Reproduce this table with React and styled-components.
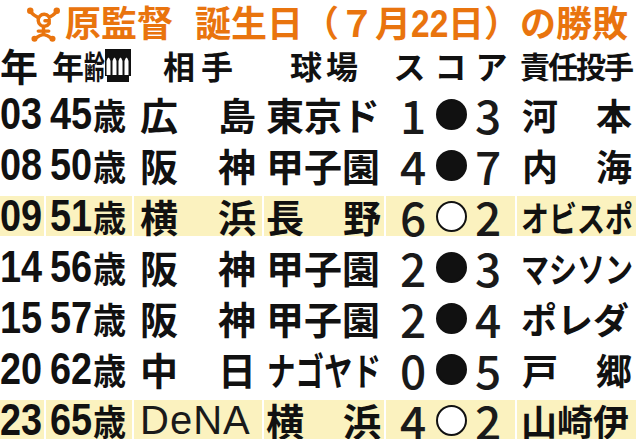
import React from 'react';
import styled, { createGlobalStyle } from 'styled-components';

const ORANGE = '#e9740e';
const BAND = '#fbf2bf';
const CJK = '"Noto Sans CJK JP", "Noto Sans", sans-serif';
const LATIN = '"Liberation Sans", Arial, sans-serif';

const GlobalStyle = createGlobalStyle`
  html, body {
    margin: 0;
    padding: 0;
    background: #fff;
  }
  body {
    width: 636px;
    height: 439px;
    overflow: hidden;
    font-family: ${CJK};
    color: #111;
  }
`;

const Page = styled.div`
  width: 636px;
`;

const Title = styled.h1`
  box-sizing: border-box;
  width: 636px;
  height: 42px;
  margin: 0;
  padding-left: 25px;
  color: ${ORANGE};
  font: 700 36px/42px ${CJK};
  white-space: nowrap;
  overflow: hidden;
`;

const LogoBox = styled.span`
  display: inline-block;
  width: 37px;
  height: 36px;
  margin-right: 3px;
  vertical-align: -5px;
`;

const TitleGap = styled.span`
  display: inline-block;
  width: 22px;
`;

const TitleNum = styled.span`
  display: inline-block;
  font: 700 39px/42px ${LATIN};
  transform: scaleX(0.86);
  transform-origin: left center;
  width: 37px;
`;

const Grid = styled.div`
  display: grid;
  grid-template-columns: 44px 86px 128px 120px 129px 119px;
  grid-template-rows: ${(p) => p.$h}px;
  column-gap: 2px;
  height: ${(p) => p.$h}px;
  margin-top: ${(p) => p.$mt}px;
`;

const Cell = styled.div`
  display: flex;
  align-items: center;
  justify-content: ${(p) => p.$justify || 'flex-start'};
  padding: 0 ${(p) => p.$pr || 0}px 0 ${(p) => p.$pl || 0}px;
  background: ${(p) => (p.$hl ? BAND : 'transparent')};
  white-space: nowrap;
  min-width: 0;
`;

const HeadText = styled.span`
  font: 700 ${(p) => p.$size || 32}px/1 ${CJK};
  letter-spacing: ${(p) => p.$ls || 0}px;
  margin-right: ${(p) => -(p.$ls || 0)}px;
`;

const Num = styled.span`
  display: inline-block;
  font: 700 44px/1 ${LATIN};
  transform: scaleX(0.86);
  transform-origin: left center;
  width: ${(p) => p.$w}px;
`;

const Kanji = styled.span`
  font: 700 ${(p) => p.$size || 38}px/1 ${CJK};
`;

const Squeeze = styled.span`
  display: inline-block;
  font: 700 ${(p) => p.$size || 36}px/1 ${CJK};
  transform: scaleX(${(p) => p.$sx});
  transform-origin: left center;
  width: ${(p) => p.$w}px;
`;

const Latin = styled.span`
  font: 400 40px/1 ${LATIN};
  letter-spacing: 1px;
  color: #1a1a1a;
`;

const ScoreDigit = styled.span`
  font: 500 46px/1 ${CJK};
  width: 27px;
  text-align: center;
  color: #1a1a1a;
`;

const Mark = styled.span`
  display: inline-block;
  box-sizing: border-box;
  flex-shrink: 0;
  width: 31px;
  height: 31px;
  border-radius: 50%;
  margin: 0 8px 0 9px;
  background: ${(p) => (p.$win ? '#fff' : '#111')};
  border: 2px solid #111;
`;

const Logo = () => (
  <LogoBox>
    <svg width="37" height="36" viewBox="0 0 38 38">
      <g fill="none" stroke={ORANGE} strokeWidth="3.6" strokeLinecap="round">
        <path d="M5 6 Q9 10 13 12" />
        <path d="M33 6 Q29 10 25 12" />
        <path d="M24.5 11 A6.3 6.3 0 1 0 25 18.5 L25 15.5 L20.5 15.5" />
        <path d="M19 21.5 L19 30" />
        <path d="M19 30 Q15 31 10.5 34" />
        <path d="M19 30 Q23 31 27.5 34" />
        <path d="M13.5 26.5 L24.5 26.5" />
      </g>
      <g fill={ORANGE}>
        <circle cx="5" cy="5" r="3.4" />
        <circle cx="33" cy="5" r="3.4" />
        <circle cx="9.5" cy="34.5" r="3.2" />
        <circle cx="28.5" cy="34.5" r="3.2" />
      </g>
    </svg>
  </LogoBox>
);

const Glitch = () => (
  <svg width="26" height="33" viewBox="0 0 26 33" style={{ flexShrink: 0 }}>
    <rect x="0" y="0" width="26" height="33" fill="#111" />
    {[3.5, 9.5, 15.5, 21.5].map((x) => (
      <path
        key={x}
        d={`M${x - 2} 26 L${x - 2} 12 Q${x} 5 ${x + 2} 12 L${x + 2} 26 Z`}
        fill="#fff"
      />
    ))}
    <rect x="0" y="27" width="2" height="6" fill="#fff" />
    <rect x="24" y="27" width="2" height="6" fill="#fff" />
  </svg>
);

const rows = [
  { y: '03', age: '45', team: ['広', '島'], park: ['東京ド'], s: ['1', '3'], win: false, p: ['河', '本'] },
  { y: '08', age: '50', team: ['阪', '神'], park: ['甲子園'], s: ['4', '7'], win: false, p: ['内', '海'] },
  { y: '09', age: '51', team: ['横', '浜'], park: ['長', '野'], s: ['6', '2'], win: true, p: ['オビスポ'], sq: true, hl: true },
  { y: '14', age: '56', team: ['阪', '神'], park: ['甲子園'], s: ['2', '3'], win: false, p: ['マシソン'], sq: true },
  { y: '15', age: '57', team: ['阪', '神'], park: ['甲子園'], s: ['2', '4'], win: false, p: ['ポレダ'] },
  { y: '20', age: '62', team: ['中', '日'], park: ['ナゴヤド'], s: ['0', '5'], win: false, p: ['戸', '郷'] },
  { y: '23', age: '65', team: ['DeNA'], park: ['横', '浜'], s: ['4', '2'], win: true, p: ['山崎伊'], hl: true },
];

const TeamCell = ({ team, hl }) =>
  team[0] === 'DeNA' ? (
    <Cell $hl={hl} $pl={6}>
      <Latin>DeNA</Latin>
    </Cell>
  ) : (
    <Cell $hl={hl} $justify="space-between" $pl={6} $pr={6}>
      <Kanji>{team[0]}</Kanji>
      <Kanji>{team[1]}</Kanji>
    </Cell>
  );

const ParkCell = ({ park, hl }) => {
  if (park.length === 2) {
    return (
      <Cell $hl={hl} $justify="space-between" $pl={2} $pr={3}>
        <Kanji>{park[0]}</Kanji>
        <Kanji>{park[1]}</Kanji>
      </Cell>
    );
  }
  if (park[0].length === 4) {
    return (
      <Cell $hl={hl} $pl={3}>
        <Squeeze $size={38} $sx={0.75} $w={114}>{park[0]}</Squeeze>
      </Cell>
    );
  }
  return (
    <Cell $hl={hl} $pl={2}>
      <Kanji>{park[0]}</Kanji>
    </Cell>
  );
};

const PitcherCell = ({ p, sq, hl }) => {
  if (p.length === 2) {
    return (
      <Cell $hl={hl} $justify="space-between" $pl={5} $pr={4}>
        <Kanji $size={36}>{p[0]}</Kanji>
        <Kanji $size={36}>{p[1]}</Kanji>
      </Cell>
    );
  }
  return (
    <Cell $hl={hl} $pl={4}>
      {sq ? (
        <Squeeze $size={35} $sx={0.8} $w={112}>{p[0]}</Squeeze>
      ) : (
        <Kanji $size={36}>{p[0]}</Kanji>
      )}
    </Cell>
  );
};

const App = () => (
  <Page>
    <GlobalStyle />
    <Title>
      <Logo />
      原監督
      <TitleGap />
      誕生日（７月<TitleNum>22</TitleNum>日）の勝敗
    </Title>

    <Grid $h={46} $mt={0}>
      <Cell>
        <HeadText $size={38}>年</HeadText>
      </Cell>
      <Cell $pl={6}>
        <HeadText $size={32}>年</HeadText>
        <Squeeze $size={32} $sx={0.65} $w={21}>齢</Squeeze>
        <Glitch />
      </Cell>
      <Cell $justify="center">
        <HeadText $ls={6}>相手</HeadText>
      </Cell>
      <Cell $justify="center">
        <HeadText $ls={4}>球場</HeadText>
      </Cell>
      <Cell $justify="center">
        <HeadText $ls={9}>スコア</HeadText>
      </Cell>
      <Cell $pl={3}>
        <HeadText $size={30} $ls={-2}>責任投手</HeadText>
      </Cell>
    </Grid>

    {rows.map((r, i) => (
      <Grid key={r.y} $h={40} $mt={i === 0 ? 6 : 11}>
        <Cell $hl={r.hl}>
          <Num $w={43}>{r.y}</Num>
        </Cell>
        <Cell $hl={r.hl} $pl={4}>
          <Num $w={43}>{r.age}</Num>
          <Squeeze $size={36} $sx={0.92} $w={33}>歳</Squeeze>
        </Cell>
        <TeamCell team={r.team} hl={r.hl} />
        <ParkCell park={r.park} hl={r.hl} />
        <Cell $hl={r.hl} $justify="center">
          <ScoreDigit>{r.s[0]}</ScoreDigit>
          <Mark $win={r.win} />
          <ScoreDigit>{r.s[1]}</ScoreDigit>
        </Cell>
        <PitcherCell p={r.p} sq={r.sq} hl={r.hl} />
      </Grid>
    ))}
  </Page>
);

export default App;
